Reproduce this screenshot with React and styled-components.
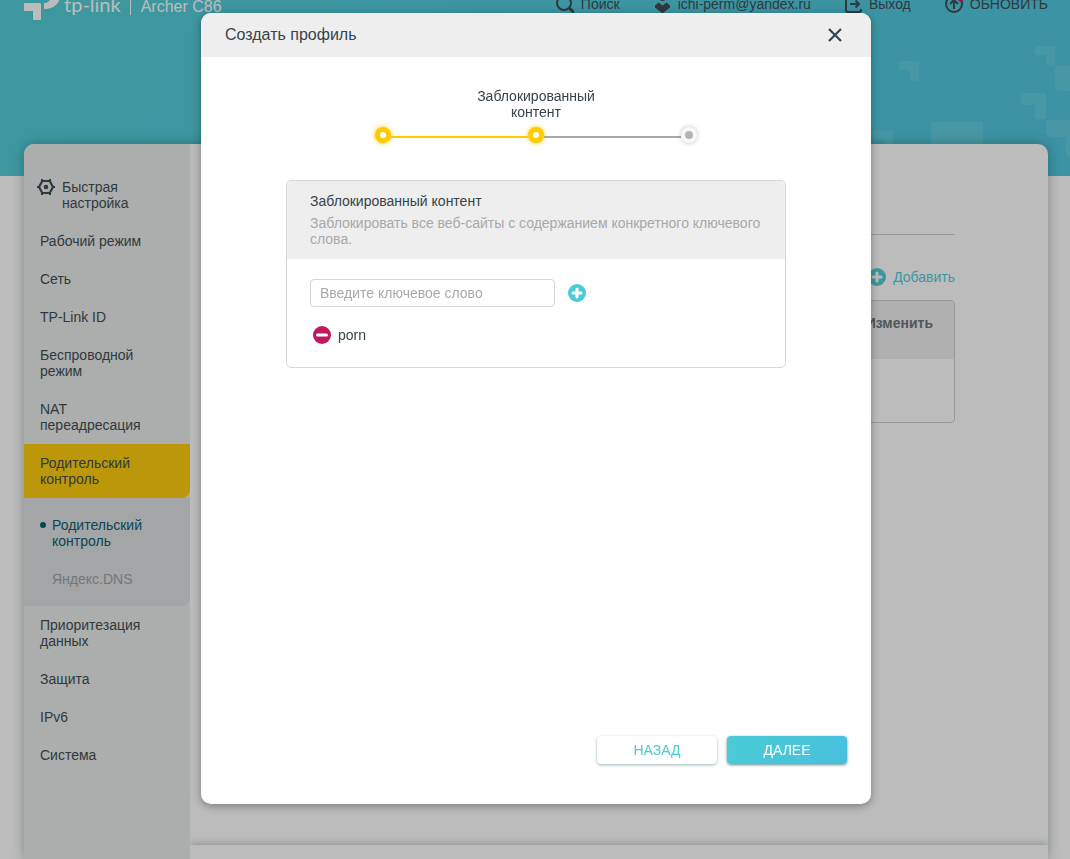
import React, { useState } from 'react'
import styled, { createGlobalStyle } from 'styled-components'

const GlobalStyle = createGlobalStyle`
* {
    box-sizing: border-box;
}
body {
    margin: 0;
    font-family: Arial, "Liberation Sans", sans-serif;
    font-size: 14px;
    line-height: 16px;
    color: #36444b;
    background: #fff;
}
button, input {
    font-family: inherit;
    font-size: 14px;
    line-height: 16px;
}
button {
    border: none;
    padding: 0;
    background: none;
    cursor: pointer;
}
ul {
    list-style: none;
    margin: 0;
    padding: 0;
}
a {
    color: inherit;
    text-decoration: none;
}
svg {
    display: block;
    flex: none;
}
`;

const Page = styled.div`
    height: 100vh;
    overflow: hidden;
    display: flex;
    flex-direction: column;
`;

const Hero = styled.header`
    position: relative;
    flex: none;
    height: 176px;
    padding: 0 22px 0 24px;
    background: linear-gradient(100deg, #4acbd6, #47c4dc);
`;

const Pattern = styled.svg`
    position: absolute;
    top: 0;
    right: 0;
`;

const TopBar = styled.div`
    position: relative;
    height: 8px;
    display: flex;
    align-items: center;
    justify-content: space-between;
    white-space: nowrap;
`;

const Brand = styled.a`
    display: flex;
    align-items: center;
    gap: 4px;
    color: #fff;
`;

const BrandText = styled.span`
    display: flex;
    align-items: baseline;
`;

const Wordmark = styled.span`
    font-family: Lato, sans-serif;
    font-size: 20px;
    line-height: 20px;
`;

const Model = styled.span`
    margin-left: 9px;
    padding-left: 10px;
    border-left: 1px solid #fff;
    font-size: 16px;
    line-height: 16px;
`;

const TopNav = styled.nav`
    display: flex;
    align-items: center;
    gap: 34px;
`;

const TopLink = styled.a`
    display: flex;
    align-items: center;
    gap: 7px;
`;

const Card = styled.div`
    position: relative;
    flex: 1;
    min-height: 0;
    display: flex;
    margin: -32px 22px 0 24px;
    border-radius: 10px 10px 0 0;
    background: #fff;
    box-shadow: 0 0 12px rgba(0, 40, 40, 0.35);
`;

const Sidebar = styled.nav`
    position: relative;
    flex: none;
    width: 166px;
    padding-top: 24px;
    border-radius: 10px 0 0 0;
    background: #e9ebea;
`;

const MenuLink = styled.a`
    display: flex;
    gap: 7px;
    padding: 11px 24px 11px ${(p) => (p.$icon ? '13px' : '16px')};
    background: ${(p) => (p.$active ? '#ffcb00' : 'transparent')};
    border-radius: 0 0 8px 0;
`;

const SubMenu = styled.ul`
    padding: 8px 0;
    background: #dddfe1;
    border-radius: 0 0 8px 0;
`;

const SubLink = styled.a`
    display: flex;
    align-items: flex-start;
    padding: 11px 24px 11px 16px;
    color: ${(p) => (p.$active ? '#005566' : '#999c9e')};

    &::before {
        content: "";
        flex: none;
        width: 6px;
        height: 6px;
        margin: 5px 6px 0 0;
        border-radius: 50%;
        background: ${(p) => (p.$active ? '#005566' : 'transparent')};
    }
`;

const Main = styled.main`
    flex: 1;
    min-width: 0;
    display: flex;
    flex-direction: column;
    overflow: hidden;
`;

const Content = styled.section`
    flex: 1;
    padding: 90px 93px 0;
`;

const Toolbar = styled.div`
    display: flex;
    justify-content: flex-end;
    padding: 33px 0 14px;
    border-top: 1px solid #ccc;
`;

const AddButton = styled.button`
    display: flex;
    align-items: center;
    gap: 7px;
    color: #4acbd6;
`;

const ProfileTable = styled.table`
    width: 100%;
    border: 1px solid #ccc;
    border-radius: 4px;
    border-spacing: 0;
    overflow: hidden;
`;

const HeadCell = styled.th`
    height: 58px;
    padding: 14px 21px 0;
    background: #eee;
    color: #666e74;
    text-align: right;
    vertical-align: top;
`;

const Cell = styled.td`
    height: 63px;
    padding: 0;
`;

const PageFooter = styled.footer`
    height: 14px;
    background: #fff;
    box-shadow: 0 0 10px rgba(0, 30, 30, 0.35);
`;

const Overlay = styled.div`
    position: fixed;
    inset: 0;
    display: flex;
    justify-content: center;
    padding: 13px 22px 55px 24px;
    background: rgba(34, 34, 34, 0.3);
`;

const Dialog = styled.div`
    display: flex;
    flex-direction: column;
    width: 100%;
    max-width: 670px;
    border-radius: 10px;
    background: #fff;
    box-shadow: 0 2px 8px rgba(0, 0, 0, 0.35);
    overflow: hidden;
`;

const DialogHead = styled.div`
    display: flex;
    align-items: center;
    justify-content: space-between;
    height: 44px;
    padding: 0 24px;
    background: #eee;
`;

const DialogTitle = styled.h2`
    margin: 0;
    font-size: 16px;
    font-weight: normal;
    line-height: 20px;
`;

const CloseButton = styled.button`
    display: flex;
    align-items: center;
    justify-content: center;
    width: 24px;
    height: 24px;
    color: #36444b;
`;

const DialogBody = styled.div`
    flex: 1;
    display: flex;
    flex-direction: column;
    align-items: center;
    padding: 31px 24px 0;
`;

const StepLabel = styled.div`
    width: 153px;
    text-align: center;
`;

const Steps = styled.div`
    display: flex;
    align-items: center;
    width: 100%;
    max-width: 322px;
    margin: 7px 0 37px;
`;

const StepDot = styled.span`
    width: 16px;
    height: 16px;
    border-radius: 50%;
    border: ${(p) => (p.$done ? '5px solid #ffcb00' : '4px solid #f8f8f8')};
    background: ${(p) => (p.$done ? '#fff' : '#b2b5b7')};
    box-shadow: 0 0 5px ${(p) => (p.$done ? '#ffcb00' : 'rgba(0, 0, 0, 0.25)')};
`;

const StepLine = styled.span`
    flex: 1;
    height: 2px;
    margin-top: 4px;
    background: ${(p) => (p.$done ? '#ffcb00' : '#a7a9ac')};
`;

const Panel = styled.section`
    width: 100%;
    max-width: 500px;
    border: 1px solid #d4d6d7;
    border-radius: 5px;
    overflow: hidden;
`;

const PanelHead = styled.div`
    padding: 12px 23px;
    background: #eee;
`;

const PanelTitle = styled.h3`
    margin: 0 0 6px;
    font-size: 14px;
    font-weight: normal;
`;

const PanelText = styled.p`
    margin: 0;
    color: #a7a9ac;
`;

const PanelBody = styled.div`
    padding: 20px 23px 23px;
`;

const InputRow = styled.form`
    display: flex;
    align-items: center;
    gap: 13px;
`;

const KeywordInput = styled.input`
    width: 245px;
    height: 28px;
    padding: 0 9px;
    border: 1px solid #d4d6d7;
    border-radius: 4px;
    color: #36444b;
    outline: none;

    &::placeholder {
        color: #a7a9ac;
        opacity: 1;
    }
`;

const KeywordList = styled.ul`
    margin-top: 19px;
`;

const Keyword = styled.li`
    display: flex;
    align-items: center;
    gap: 7px;
    padding-left: 3px;
`;

const Actions = styled.div`
    display: flex;
    justify-content: flex-end;
    gap: 10px;
    padding: 0 24px 40px;
`;

const Button = styled.button`
    width: 120px;
    height: 28px;
    border-radius: 4px;
    text-transform: uppercase;
    color: ${(p) => (p.$primary ? '#fff' : '#4acbd6')};
    background: ${(p) => (p.$primary ? 'linear-gradient(110deg, #4acbd6, #47c0de)' : '#fff')};
    box-shadow: 0 1px 3px rgba(0, 70, 80, ${(p) => (p.$primary ? '0.6' : '0.4')});
`;

function Logo() {
    return (
        <svg width="36" height="32" viewBox="0 0 36 32" fill="currentColor">
            <path d="M1 15h15a1 1 0 0 1 1 1v15a1 1 0 0 1-1 1h-6a1 1 0 0 1-1-1v-8H1a1 1 0 0 1-1-1v-6a1 1 0 0 1 1-1z" />
            <path d="M20 15h1a6 7 0 0 0 0-14H9v-6h12a15 13 0 0 1 0 26h-1z" />
        </svg>
    )
}

function SearchIcon() {
    return (
        <svg width="18" height="18" viewBox="0 0 18 18" fill="none" stroke="currentColor" strokeWidth="2">
            <circle cx="8" cy="8" r="7" />
            <path d="M13 13l5 4.500" strokeWidth="3" />
        </svg>
    )
}

function UserIcon() {
    return (
        <svg width="17" height="18" viewBox="0 0 17 18" fill="currentColor">
            <circle cx="8.500" cy="2.500" r="3.500" />
            <path d="M1 12.500V10.500L4.500 7.500 8.500 10.500l4-3L16 10.500v2L8.500 18.500z" />
        </svg>
    )
}

function ExitIcon() {
    return (
        <svg width="17" height="18" viewBox="0 0 17 18" fill="none" stroke="currentColor" strokeWidth="2">
            <path d="M16 4V3a2 2 0 0 0-2-2H3a2 2 0 0 0-2 2v12a2 2 0 0 0 2 2h11a2 2 0 0 0 2-2v-1" />
            <path d="M5 9h9M10.500 5.500 14 9l-3.500 3.500" />
        </svg>
    )
}

function UpdateIcon() {
    return (
        <svg width="18" height="18" viewBox="0 0 18 18" fill="none" stroke="currentColor" strokeWidth="2">
            <circle cx="9" cy="9" r="8" />
            <path d="M9 14V5M5 9l4-4 4 4" />
            <circle cx="16.500" cy="3.500" r="3.500" fill="#cf1060" stroke="none" />
        </svg>
    )
}

function GearIcon() {
    return (
        <svg width="18" height="16" viewBox="0 0 18 16" fill="none" stroke="currentColor">
            <path d="M5.300 2h7.400L16 8l-3.300 6H5.300L2 8z" strokeWidth="2.200" strokeLinejoin="round" />
            <path d="M5 0v2M13 0v2M5 14v2M13 14v2M0 8h2M16 8h2" strokeWidth="2" />
            <circle cx="9" cy="8" r="2.300" fill="currentColor" stroke="none" />
        </svg>
    )
}

function PlusIcon() {
    return (
        <svg width="18" height="18" viewBox="0 0 18 18">
            <circle cx="9" cy="9" r="9" fill="#4acbd6" />
            <path d="M9 5v8M5 9h8" stroke="#fff" strokeWidth="3" strokeLinecap="round" />
        </svg>
    )
}

function MinusIcon() {
    return (
        <svg width="18" height="18" viewBox="0 0 18 18">
            <circle cx="9" cy="9" r="9" fill="#c2185f" />
            <path d="M4.500 9h9" stroke="#fff" strokeWidth="3" strokeLinecap="round" />
        </svg>
    )
}

function CloseIcon() {
    return (
        <svg width="14" height="14" viewBox="0 0 14 14" fill="none" stroke="currentColor" strokeWidth="2.200">
            <path d="M1 1l12 12M13 1 1 13" />
        </svg>
    )
}

function HeroPattern() {
    return (
        <Pattern width="200" height="176" viewBox="0 0 200 176" fill="#fff" fillOpacity="0.1">
            <path d="M29 61h20v20h-7a2 2 0 0 1-2-2v-9h-9a2 2 0 0 1-2-2z" />
            <path d="M165 46h20v20h-7a2 2 0 0 1-2-2v-9h-9a2 2 0 0 1-2-2z" />
            <path d="M185 66h15v25h-10a5 5 0 0 1-5-5z" />
            <path d="M151 93h25v26h-9a2 2 0 0 1-2-2v-12h-11a3 3 0 0 1-3-3z" />
            <path d="M176 120h24v37a4 4 0 0 1-4-4v-16h-15a5 5 0 0 1-5-5z" />
            <path d="M61 122h52v30H61z" />
            <path d="M3 131h20v20h-7a2 2 0 0 1-2-2v-9H5a2 2 0 0 1-2-2z" />
        </Pattern>
    )
}

const menu = [
    { label: 'Быстрая настройка', icon: true },
    { label: 'Рабочий режим' },
    { label: 'Сеть' },
    { label: 'TP-Link ID' },
    { label: 'Беспроводной режим' },
    { label: 'NAT переадресация' },
    { label: 'Родительский контроль', active: true, children: ['Родительский контроль', 'Яндекс.DNS'] },
    { label: 'Приоритезация данных' },
    { label: 'Защита' },
    { label: 'IPv6' },
    { label: 'Система' },
]

function App() {
    const [keywords, setKeywords] = useState(['porn'])
    const [value, setValue] = useState('')

    const addKeyword = (e) => {
        e.preventDefault()
        const word = value.trim()
        if (word && !keywords.includes(word)) {
            setKeywords([...keywords, word])
        }
        setValue('')
    }

    return (
        <Page>
            <GlobalStyle />
            <Hero>
                <HeroPattern />
                <TopBar>
                    <Brand href="#">
                        <Logo />
                        <BrandText>
                            <Wordmark>tp-link</Wordmark>
                            <Model>Archer C86</Model>
                        </BrandText>
                    </Brand>
                    <TopNav>
                        <TopLink href="#search"><SearchIcon />Поиск</TopLink>
                        <TopLink href="#account"><UserIcon />ichi-perm@yandex.ru</TopLink>
                        <TopLink href="#logout"><ExitIcon />Выход</TopLink>
                        <TopLink href="#update"><UpdateIcon />ОБНОВИТЬ</TopLink>
                    </TopNav>
                </TopBar>
            </Hero>
            <Card>
                <Sidebar>
                    <ul>
                        {menu.map((item) => (
                            <li key={item.label}>
                                <MenuLink href="#" $icon={item.icon} $active={item.active}>
                                    {item.icon && <GearIcon />}
                                    {item.label}
                                </MenuLink>
                                {item.children && (
                                    <SubMenu>
                                        {item.children.map((label, i) => (
                                            <li key={label}>
                                                <SubLink href="#" $active={i === 0}>{label}</SubLink>
                                            </li>
                                        ))}
                                    </SubMenu>
                                )}
                            </li>
                        ))}
                    </ul>
                </Sidebar>
                <Main>
                    <Content>
                        <Toolbar>
                            <AddButton type="button"><PlusIcon />Добавить</AddButton>
                        </Toolbar>
                        <ProfileTable>
                            <thead>
                                <tr><HeadCell>Изменить</HeadCell></tr>
                            </thead>
                            <tbody>
                                <tr><Cell /></tr>
                            </tbody>
                        </ProfileTable>
                    </Content>
                    <PageFooter />
                </Main>
            </Card>
            <Overlay>
                <Dialog role="dialog" aria-modal="true" aria-labelledby="dialog-title">
                    <DialogHead>
                        <DialogTitle id="dialog-title">Создать профиль</DialogTitle>
                        <CloseButton type="button" aria-label="Закрыть"><CloseIcon /></CloseButton>
                    </DialogHead>
                    <DialogBody>
                        <StepLabel>Заблокированный контент</StepLabel>
                        <Steps>
                            <StepDot $done />
                            <StepLine $done />
                            <StepDot $done />
                            <StepLine />
                            <StepDot />
                        </Steps>
                        <Panel>
                            <PanelHead>
                                <PanelTitle>Заблокированный контент</PanelTitle>
                                <PanelText>
                                    Заблокировать все веб-сайты с содержанием конкретного ключевого слова.
                                </PanelText>
                            </PanelHead>
                            <PanelBody>
                                <InputRow onSubmit={addKeyword}>
                                    <KeywordInput
                                        type="text"
                                        aria-label="Ключевое слово"
                                        placeholder="Введите ключевое слово"
                                        value={value}
                                        onChange={(e) => setValue(e.target.value)}
                                    />
                                    <button type="submit" aria-label="Добавить"><PlusIcon /></button>
                                </InputRow>
                                <KeywordList>
                                    {keywords.map((word) => (
                                        <Keyword key={word}>
                                            <button
                                                type="button"
                                                aria-label={'Удалить ' + word}
                                                onClick={() => setKeywords(keywords.filter((k) => k !== word))}
                                            >
                                                <MinusIcon />
                                            </button>
                                            {word}
                                        </Keyword>
                                    ))}
                                </KeywordList>
                            </PanelBody>
                        </Panel>
                    </DialogBody>
                    <Actions>
                        <Button type="button">Назад</Button>
                        <Button type="button" $primary>Далее</Button>
                    </Actions>
                </Dialog>
            </Overlay>
        </Page>
    )
}

export default App
